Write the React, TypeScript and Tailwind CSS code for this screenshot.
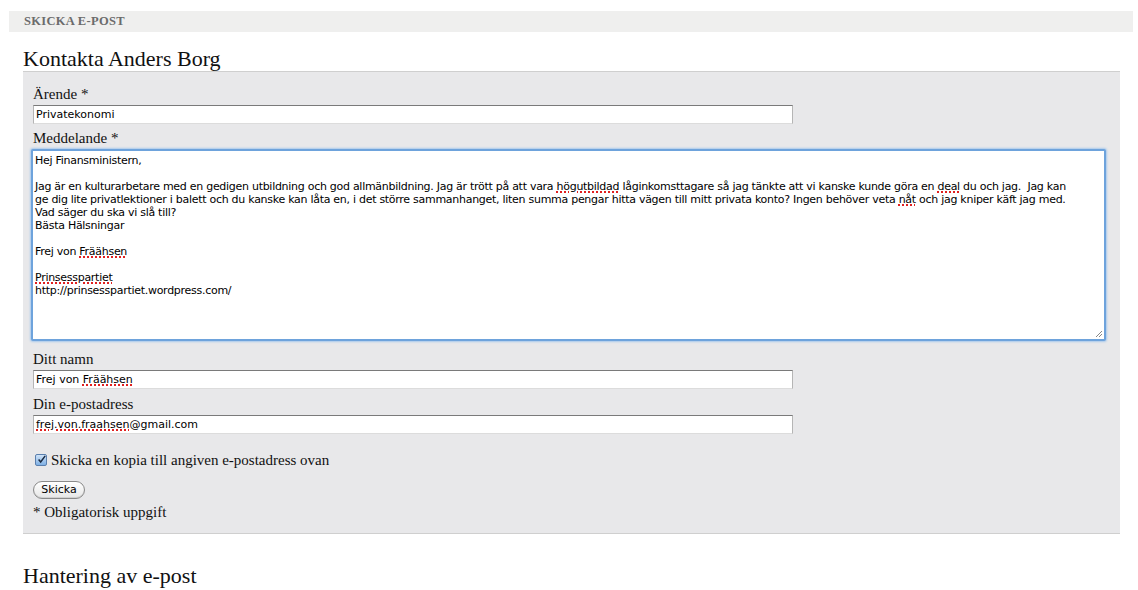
const serif = "font-['Georgia','Liberation_Serif','DejaVu_Serif',serif]";
const ui = "font-['Lucida_Grande','DejaVu_Sans','Liberation_Sans',sans-serif]";

function Squiggle({ children }: { children: React.ReactNode }) {
  return (
    <span className="underline decoration-dotted decoration-[#e02020] decoration-2 underline-offset-[1px]">
      {children}
    </span>
  );
}

function Field({ children }: { children: React.ReactNode }) {
  return (
    <div
      className={`${ui} mt-[2px] h-[19px] w-[760px] bg-white border border-[#b5b5b5] border-t-[#7a7a7a] border-b-[#dcdcdc] pl-[2px] text-[11px] leading-[17px] text-black whitespace-pre`}
    >
      {children}
    </div>
  );
}

function Label({ children }: { children: React.ReactNode }) {
  return <div className="text-[15px] leading-[18px] text-[#111]">{children}</div>;
}

export default function App() {
  return (
    <div className={`${serif} w-[1138px] h-[590px] bg-white overflow-hidden`}>
      <div className="pt-[11px] pl-[9px] pr-[5px]">
        <div className="h-[21px] bg-[#efefee] pl-[15px] text-[12.5px] font-bold leading-[21px] text-[#6b6b6b] uppercase tracking-[0.3px]">
          Skicka e-post
        </div>
      </div>

      <div className="pl-[23px] pr-[18px]">
        <h2 className="mt-[14px] h-[25px] text-[22px] leading-[25px] text-[#111]">Kontakta Anders Borg</h2>

        <div className="bg-[#e8e8ea] border-t border-b border-[#cfcfcf] pl-[10px] pt-[13px] pb-[12px]">
          <Label>Ärende *</Label>
          <Field>Privatekonomi</Field>

          <div className="mt-[5px]">
            <Label>Meddelande *</Label>
          </div>
          <div
            className={`${ui} mt-[2px] ml-[-2px] h-[192px] w-[1075px] bg-white rounded-[2px] border-2 border-[#6ea3dc] shadow-[0_0_2px_1px_#a9c9ec] px-[2px] pt-[3px] text-[11px] leading-[13px] tracking-[-0.28px] text-black whitespace-pre relative`}
          >
            {"Hej Finansministern,\n\nJag är en kulturarbetare med en gedigen utbildning och god allmänbildning. Jag är trött på att vara "}
            <Squiggle>högutbildad</Squiggle>
            {" låginkomsttagare så jag tänkte att vi kanske kunde göra en "}
            <Squiggle>deal</Squiggle>
            {" du och jag.  Jag kan\nge dig lite privatlektioner i balett och du kanske kan låta en, i det större sammanhanget, liten summa pengar hitta vägen till mitt privata konto? Ingen behöver veta "}
            <Squiggle>nåt</Squiggle>
            {" och jag kniper käft jag med.\nVad säger du ska vi slå till?\nBästa Hälsningar\n\nFrej von "}
            <Squiggle>Fräähsen</Squiggle>
            {"\n\n"}
            <Squiggle>Prinsesspartiet</Squiggle>
            {"\nhttp://prinsesspartiet.wordpress.com/"}
            <svg className="absolute right-[1px] bottom-[1px]" width="8" height="8" viewBox="0 0 8 8">
              <path d="M7 1 L1 7 M7 4 L4 7" stroke="#888" strokeWidth="1" />
            </svg>
          </div>

          <div className="mt-[9px]">
            <Label>Ditt namn</Label>
          </div>
          <Field>
            {"Frej von "}
            <Squiggle>Fräähsen</Squiggle>
          </Field>

          <div className="mt-[6px]">
            <Label>Din e-postadress</Label>
          </div>
          <Field>
            <Squiggle>frej.von.fraahsen</Squiggle>
            {"@gmail.com"}
          </Field>

          <div className="mt-[17px] flex items-center h-[18px] ml-[2px]">
            <span className="flex items-center justify-center w-[12px] h-[12px] rounded-[2px] border border-[#5a7fae] bg-gradient-to-b from-[#cfe3f8] to-[#7fb0e4]">
              <svg width="11" height="11" viewBox="0 0 11 11" className="-mt-[2px] ml-[1px]">
                <path d="M2 5.5 L4.5 8.5 L10 1" fill="none" stroke="#1b2a40" strokeWidth="1.8" />
              </svg>
            </span>
            <span className="ml-[4px] text-[15px] leading-[18px] text-[#111]">Skicka en kopia till angiven e-postadress ovan</span>
          </div>

          <div className="mt-[12px] flex">
            <button
              className={`${ui} h-[18px] w-[52px] rounded-full border border-[#8a8a8a] bg-gradient-to-b from-white to-[#e6e6e6] text-[11px] leading-[16px] text-black shadow-[inset_0_-1px_0_#d0d0d0]`}
            >
              Skicka
            </button>
          </div>
          <div className="mt-[4px]">
            <Label>* Obligatorisk uppgift</Label>
          </div>
        </div>

        <h2 className="mt-[29px] text-[22px] leading-[25px] text-[#111]">Hantering av e-post</h2>
      </div>
    </div>
  );
}
